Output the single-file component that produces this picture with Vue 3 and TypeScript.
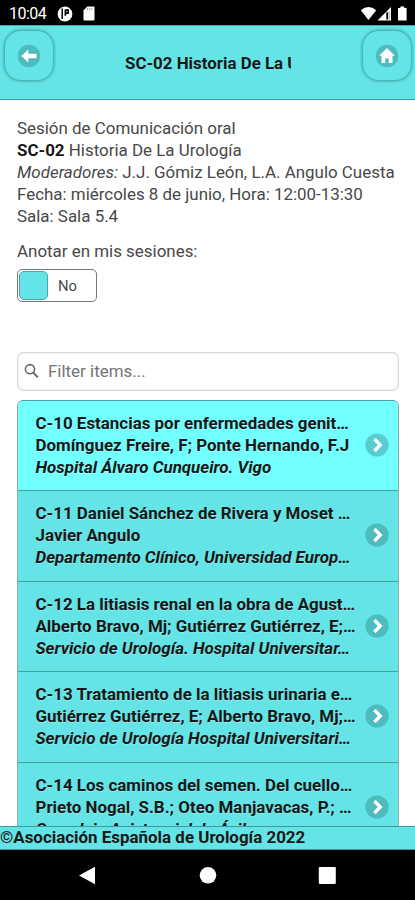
<script setup lang="ts">
interface Talk {
  title: string
  authors: string
  place: string
}

const talks: Talk[] = [
  { title: 'C-10 Estancias por enfermedades genit…', authors: 'Domínguez Freire, F; Ponte Hernando, F.J', place: 'Hospital Álvaro Cunqueiro. Vigo' },
  { title: 'C-11 Daniel Sánchez de Rivera y Moset …', authors: 'Javier Angulo', place: 'Departamento Clínico, Universidad Europ…' },
  { title: 'C-12 La litiasis renal en la obra de Agust…', authors: 'Alberto Bravo, Mj; Gutiérrez Gutiérrez, E;…', place: 'Servicio de Urología. Hospital Universitar…' },
  { title: 'C-13 Tratamiento de la litiasis urinaria e…', authors: 'Gutiérrez Gutiérrez, E; Alberto Bravo, Mj;…', place: 'Servicio de Urología Hospital Universitari…' },
  { title: 'C-14 Los caminos del semen. Del cuello…', authors: 'Prieto Nogal, S.B.; Oteo Manjavacas, P.; …', place: 'Complejo Asistencial de Ávila' },
]
</script>

<template>
  <div class="screen">
    <div class="status">
      <span class="clock">10:04</span>
      <svg class="app-dot" width="16" height="16" viewBox="0 0 16 16">
        <circle cx="8" cy="8" r="7.4" fill="#fff" />
        <path d="M5.2 2.6v10.4" fill="none" stroke="#000" stroke-width="1.5" />
        <path d="M8.4 3.4v6.4M8.4 4.2h2.8v3H8.4" fill="none" stroke="#000" stroke-width="1.7" />
      </svg>
      <svg class="sd" width="12" height="15" viewBox="0 0 12 15">
        <path d="M4.2 0.5h6.3q1 0 1 1v12q0 1-1 1h-9q-1 0-1-1V4.4z" fill="#fff" />
        <path d="M4.5 2v2.2M6.7 2v2.2M8.9 2v2.2" stroke="#999" stroke-width="0.9" />
      </svg>
      <span class="gap"></span>
      <svg width="49" height="16" viewBox="0 0 49 16">
        <path d="M0.8 4.2Q8.5-2.4 16.2 4.2L8.5 14z" fill="#fff" />
        <path d="M31 1v13.5H17.5z" fill="#fff" />
        <path d="M27.2 6.3v7.2" stroke="#000" stroke-width="1.8" />
        <path d="M29.4 5.5v8" stroke="#bbb" stroke-width="1.5" />
        <path d="M38 2h2.4V0.5h3.8V2h2.4v12.5H38z" fill="#fff" />
      </svg>
    </div>

    <header class="bar">
      <button class="nav-btn" aria-label="Volver">
        <svg width="24" height="24" viewBox="0 0 24 24">
          <circle cx="12" cy="12" r="11.2" fill="#4cbcbe" />
          <path d="M4.3 12l7-6.6v4.4h8.2v4.4h-8.2v4.4z" fill="#fff" />
        </svg>
      </button>
      <h1>SC-02 Historia De La Urología</h1>
      <button class="nav-btn" aria-label="Inicio">
        <svg width="24" height="24" viewBox="0 0 24 24">
          <circle cx="12" cy="12" r="11.2" fill="#4cbcbe" />
          <path d="M12 4l7.8 7.8h-2.3v7.2h-3.7v-4.6h-3.6v4.6H6.5v-7.2H4.2z" fill="#fff" />
        </svg>
      </button>
    </header>

    <main class="content">
      <div class="info">
        <div>Sesión de Comunicación oral</div>
        <div><b>SC-02</b> Historia De La Urología</div>
        <div><i>Moderadores:</i> J.J. Gómiz León, L.A. Angulo Cuesta</div>
        <div>Fecha: miércoles 8 de junio, Hora: 12:00-13:30</div>
        <div>Sala: Sala 5.4</div>
      </div>
      <div class="label">Anotar en mis sesiones:</div>
      <div class="switch">
        <span class="knob"></span>
        <span class="off">No</span>
      </div>
      <div class="search">
        <svg width="16" height="16" viewBox="0 0 16 16" fill="none" stroke="#666">
          <circle cx="6" cy="6.2" r="4.6" stroke-width="1.6" />
          <path d="M9.3 9.6l4.6 4.8" stroke-width="2" />
        </svg>
        <span>Filter items...</span>
      </div>
      <ul class="list">
        <li v-for="(t, i) in talks" :key="t.title" :class="{ active: i === 0 }">
          <div class="text">
            <p>{{ t.title }}</p>
            <p>{{ t.authors }}</p>
            <p><em>{{ t.place }}</em></p>
          </div>
          <svg width="24" height="24" viewBox="0 0 24 24">
            <circle cx="12" cy="12" r="11.6" :fill="i === 0 ? '#56ced0' : '#4cbcbe'" />
            <path d="M9.4 6l5.8 6-5.8 6" fill="none" stroke="#fff" stroke-width="3.4" />
          </svg>
        </li>
      </ul>
    </main>

    <footer class="foot">©Asociación Española de Urología 2022</footer>
    <div class="android">
      <svg width="415" height="50" viewBox="0 0 415 50" fill="#fff">
        <path d="M79 25.5L95 16.7v17.6z" />
        <circle cx="208" cy="25.3" r="8.3" />
        <rect x="318.8" y="17" width="17" height="17" rx="1.2" />
      </svg>
    </div>
  </div>
</template>

<style>
body {
  background: #fff;
  overflow: hidden;
}
</style>

<style scoped>
.screen {
  width: 415px;
  height: 900px;
  display: flex;
  flex-direction: column;
  overflow: hidden;
  background: #fff;
  color: #484848;
  font: 16.93px/22px Roboto, sans-serif;
}
.status {
  flex: none;
  height: 25px;
  background: #000;
  color: #fff;
  display: flex;
  align-items: center;
  padding: 2px 6px 0 9px;
  box-sizing: border-box;
}
.clock {
  font-size: 16px;
  width: 48px;
  letter-spacing: -0.5px;
}
.sd {
  margin-left: 10px;
}
.gap {
  flex: 1;
}
.bar {
  flex: none;
  height: 75px;
  box-sizing: border-box;
  background: #64e4e6;
  border-top: 1px solid #48a9ac;
  border-bottom: 1px solid #3f9a9d;
  display: flex;
  align-items: flex-start;
  padding: 4px 3px 0 4px;
}
.nav-btn {
  flex: none;
  width: 50px;
  height: 51px;
  box-sizing: border-box;
  padding: 0;
  border: 1px solid #4eb5b8;
  border-radius: 17px;
  background: #64e4e6;
  box-shadow: 0 0 3px rgba(0, 60, 65, 0.45);
  display: flex;
  align-items: center;
  justify-content: center;
}
.bar h1 {
  margin: 22px auto 0 71px;
  width: 166px;
  overflow: hidden;
  white-space: nowrap;
  font-size: 16.9px;
  line-height: 22px;
  font-weight: 700;
  color: #181818;
}
.content {
  flex: 1;
  min-height: 0;
  overflow: hidden;
  padding: 17px 16px 0 17px;
}
.info,
.label {
  white-space: nowrap;
}
.info b {
  color: #181818;
}
.label {
  margin-top: 13px;
}
.switch {
  margin-top: 7px;
  width: 80px;
  height: 33px;
  box-sizing: border-box;
  border: 1px solid #777;
  border-radius: 5px;
  display: flex;
  align-items: center;
  padding-left: 1px;
}
.knob {
  width: 29px;
  height: 29px;
  box-sizing: border-box;
  background: #64e4e6;
  border: 1px solid #45a9ac;
  border-radius: 5px;
}
.off {
  margin-left: 10px;
  font-size: 14.8px;
}
.search {
  margin-top: 50px;
  height: 39px;
  box-sizing: border-box;
  border: 1px solid #d8d8d8;
  border-radius: 6px;
  box-shadow: inset 0 0 2px rgba(0, 0, 0, 0.2);
  display: flex;
  align-items: center;
  gap: 8px;
  padding: 0 0 2px 6px;
  color: #747474;
}
.list {
  list-style: none;
  margin: 9px 0 0;
  padding: 0;
  border: 1px solid #489fa2;
  border-left-color: #8cafb0;
  border-right-color: #8cafb0;
  border-radius: 6px 6px 0 0;
  overflow: hidden;
}
.list li {
  height: 90.5px;
  box-sizing: border-box;
  border-bottom: 1px solid #439fa2;
  background: #64e4e6;
  color: #181818;
  display: flex;
  align-items: center;
  justify-content: space-between;
  padding: 0 9.5px 1.5px 17.5px;
}
.list li.active {
  height: 90px;
  background: #72ffff;
}
.text {
  font-weight: 700;
  white-space: nowrap;
  text-shadow: 0 1px 0 rgba(255, 255, 255, 0.25);
}
.text p {
  margin: 0;
}
.foot {
  flex: none;
  height: 24px;
  box-sizing: border-box;
  border-top: 1px solid #3f9a9d;
  border-bottom: 1px solid #3f9a9d;
  background: #64e4e6;
  color: #181818;
  font-weight: 700;
  line-height: 21px;
  white-space: nowrap;
}
.android {
  flex: none;
  height: 50px;
  background: #000;
}
.android svg {
  display: block;
}
</style>
